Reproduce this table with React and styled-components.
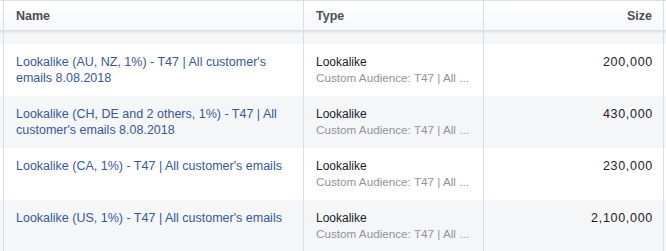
import React from 'react'
import styled, { createGlobalStyle } from 'styled-components'

const GlobalStyle = createGlobalStyle`
    * {
        box-sizing: border-box;
    }
    body {
        margin: 0;
        background: #fff;
        font-family: Helvetica, "Liberation Sans", Arial, sans-serif;
        -webkit-font-smoothing: antialiased;
    }
`

const Table = styled.div`
    width: 666px;
    height: 251px;
    overflow: hidden;
    border-top: 1px solid #dadde1;
`

const Row = styled.div`
    display: grid;
    grid-template-columns: 300px 180px 180px 1fr;
    padding-left: 3px;
    background: ${props => props.shaded ? '#f5f6f7' : '#fff'};
    height: ${props => props.height || 52}px;
`

const HeadRow = styled(Row)`
    background: linear-gradient(#ffffff, #f6f7f9);
    border-bottom: 1px solid #dadde1;
    height: 30px;
`

const Spacer = styled(Row)`
    height: 13px;
    background: #f5f6f7;
    box-shadow: inset 0 2px 2px rgba(0, 0, 0, 0.06);
`

const Cell = styled.div`
    border-left: 1px solid #dadde1;
    padding: ${props => props.head ? '1px 11px 0 12px' : '10px 11px 0 12px'};
    text-align: ${props => props.right ? 'right' : 'left'};
    font-size: 12px;
    line-height: 16px;
    color: #1d2129;
    ${props => props.head && `
        display: flex;
        align-items: center;
        justify-content: ${props.right ? 'flex-end' : 'flex-start'};
        font-size: 12.5px;
        font-weight: bold;
        color: #4b4f56;
    `}
`

const NameCell = styled(Cell)`
    padding-top: 11px;
    padding-right: 4px;
    font-size: 12.5px;
    line-height: 15.5px;
`

const SizeCell = styled(Cell)`
    padding-right: 10px;
    font-size: 12.5px;
    letter-spacing: 0.7px;
`

const EndCell = styled.div`
    border-left: 1px solid #dadde1;
`

const Link = styled.a`
    color: #385898;
    text-decoration: none;
    cursor: pointer;
`

const Sub = styled.div`
    margin-top: 1px;
    font-size: 11.7px;
    line-height: 14px;
    color: #90949c;
    white-space: nowrap;
`

const audiences = [
    { name: 'Lookalike (AU, NZ, 1%) - T47 | All customer\'s emails 8.08.2018', size: '200,000' },
    { name: 'Lookalike (CH, DE and 2 others, 1%) - T47 | All customer\'s emails 8.08.2018', size: '430,000' },
    { name: 'Lookalike (CA, 1%) - T47 | All customer\'s emails', size: '230,000' },
    { name: 'Lookalike (US, 1%) - T47 | All customer\'s emails', size: '2,100,000' },
]

const App = () => {
    return (
        <>
            <GlobalStyle />
            <Table>
                <HeadRow>
                    <Cell head>Name</Cell>
                    <Cell head>Type</Cell>
                    <Cell head right>Size</Cell>
                    <EndCell />
                </HeadRow>
                <Spacer>
                    <EndCell />
                    <EndCell />
                    <EndCell />
                    <EndCell />
                </Spacer>
                {audiences.map((audience, indx) => (
                    <Row key={indx} shaded={indx % 2 === 1}>
                        <NameCell>
                            <Link>{audience.name}</Link>
                        </NameCell>
                        <Cell>
                            Lookalike
                            <Sub>Custom Audience: T47 | All ...</Sub>
                        </Cell>
                        <SizeCell right>{audience.size}</SizeCell>
                        <EndCell />
                    </Row>
                ))}
            </Table>
        </>
    )
}

export default App
